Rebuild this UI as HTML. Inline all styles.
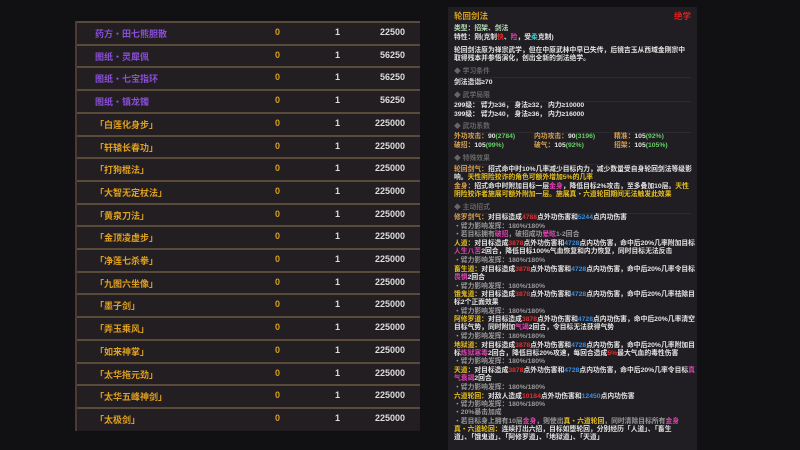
<!DOCTYPE html>
<html><head><meta charset="utf-8"><style>
body{margin:0;width:800px;height:450px;background:#111012;overflow:hidden;position:relative;font-family:"Liberation Sans","Noto Sans CJK SC",sans-serif;}
#tbl{position:absolute;left:75px;top:21px;width:343px;height:410px;background:#1f1c1f;border-left:2px solid #4a3c30;}
.row{position:absolute;left:0;width:343px;height:21px;border-top:2px solid #5a4a3a;background:#221e22;font-size:9px;font-weight:bold;}
.row span{position:absolute;top:4px;}
.n{left:18px}.a{left:198px;color:#d9a020}.b{left:258px;color:#ddd}.c{right:15px;color:#ddd}
.p{color:#8a4fd8}.o{color:#e0a020}
#pan{position:absolute;left:448px;top:7px;width:249px;height:443px;background:#201e22;}
.l{position:absolute;left:6px;font-size:6.8px;line-height:8px;color:#e4e4e4;white-space:nowrap;font-weight:bold;}
.h{color:#666;}
.g{color:#999;}
.r{color:#e03030}.bl{color:#3a8ee0}.m{color:#e040b0}.y{color:#e8c020}.or{color:#d8a050}.gr{color:#6c6}.cy{color:#3cc}
.sep{position:absolute;left:6px;width:237px;height:1px;background:#2c2a2e;}
</style></head><body>
<div id="tbl">
<div class="row" style="top:0"><span class="n p">药方・田七熊胆散</span><span class="a">0</span><span class="b">1</span><span class="c">22500</span></div>
<div class="row" style="top:22.7px"><span class="n p">图纸・灵犀佩</span><span class="a">0</span><span class="b">1</span><span class="c">56250</span></div>
<div class="row" style="top:45.4px"><span class="n p">图纸・七宝指环</span><span class="a">0</span><span class="b">1</span><span class="c">56250</span></div>
<div class="row" style="top:68.1px"><span class="n p">图纸・镇龙镯</span><span class="a">0</span><span class="b">1</span><span class="c">56250</span></div>
<div class="row" style="top:90.8px"><span class="n o">「白莲化身步」</span><span class="a">0</span><span class="b">1</span><span class="c">225000</span></div>
<div class="row" style="top:113.5px"><span class="n o">「轩辕长春功」</span><span class="a">0</span><span class="b">1</span><span class="c">225000</span></div>
<div class="row" style="top:136.2px"><span class="n o">「打狗棍法」</span><span class="a">0</span><span class="b">1</span><span class="c">225000</span></div>
<div class="row" style="top:158.9px"><span class="n o">「大智无定杖法」</span><span class="a">0</span><span class="b">1</span><span class="c">225000</span></div>
<div class="row" style="top:181.6px"><span class="n o">「黄泉刀法」</span><span class="a">0</span><span class="b">1</span><span class="c">225000</span></div>
<div class="row" style="top:204.3px"><span class="n o">「金顶凌虚步」</span><span class="a">0</span><span class="b">1</span><span class="c">225000</span></div>
<div class="row" style="top:227px"><span class="n o">「净莲七杀拳」</span><span class="a">0</span><span class="b">1</span><span class="c">225000</span></div>
<div class="row" style="top:249.7px"><span class="n o">「九图六坐像」</span><span class="a">0</span><span class="b">1</span><span class="c">225000</span></div>
<div class="row" style="top:272.4px"><span class="n o">「墨子剑」</span><span class="a">0</span><span class="b">1</span><span class="c">225000</span></div>
<div class="row" style="top:295.1px"><span class="n o">「弄玉乘风」</span><span class="a">0</span><span class="b">1</span><span class="c">225000</span></div>
<div class="row" style="top:317.8px"><span class="n o">「如来神掌」</span><span class="a">0</span><span class="b">1</span><span class="c">225000</span></div>
<div class="row" style="top:340.5px"><span class="n o">「太华拖元劲」</span><span class="a">0</span><span class="b">1</span><span class="c">225000</span></div>
<div class="row" style="top:363.2px"><span class="n o">「太华五峰神剑」</span><span class="a">0</span><span class="b">1</span><span class="c">225000</span></div>
<div class="row" style="top:385.9px"><span class="n o">「太极剑」</span><span class="a">0</span><span class="b">1</span><span class="c">225000</span></div>
</div>
<div id="pan">
<div class="l" style="top:4px;font-size:8.5px;line-height:10px;color:#d8a020">轮回剑法</div>
<div class="l" style="top:4px;left:auto;right:6px;font-size:8.5px;line-height:10px;color:#e02020">绝学</div>
<div class="l" style="top:18px"><span style="color:#bdb">类型：招架、剑法</span></div>
<div class="l" style="top:27px">特性：<span style="color:#ddd">刚(克制</span><span class="r">快</span>、<span class="m">险</span>，受<span class="cy">柔</span>克制)</div>
<div class="l" style="top:40px">轮回剑法原为禅宗武学，但在中原武林中早已失传，后镜吉玉从西域金刚宗中</div>
<div class="l" style="top:48px">取得残本并参悟演化，创出全新的剑法绝学。</div>
<div class="l h" style="top:61px">◆ 学习条件</div><div class="sep" style="top:70px"></div>
<div class="l" style="top:72px">剑法造诣≥70</div>
<div class="l h" style="top:85px">◆ 武学局限</div><div class="sep" style="top:94px"></div>
<div class="l" style="top:95px">299级： 臂力≥36， 身法≥32， 内力≥10000</div>
<div class="l" style="top:104px">399级： 臂力≥40， 身法≥36， 内力≥16000</div>
<div class="l h" style="top:116px">◆ 武功系数</div><div class="sep" style="top:125px"></div>
<div class="l" style="top:126px"><span class="or">外功攻击：</span>90<span class="gr">(2784)</span></div>
<div class="l" style="top:126px;left:86px"><span class="or">内功攻击：</span>90<span class="gr">(3196)</span></div>
<div class="l" style="top:126px;left:166px"><span class="or">精准：</span>105<span class="gr">(92%)</span></div>
<div class="l" style="top:135px"><span class="or">破招：</span>105<span class="gr">(99%)</span></div>
<div class="l" style="top:135px;left:86px"><span class="or">破气：</span>105<span class="gr">(92%)</span></div>
<div class="l" style="top:135px;left:166px"><span class="or">招架：</span>105<span class="gr">(105%)</span></div>
<div class="l h" style="top:148px">◆ 特殊效果</div><div class="sep" style="top:157px"></div>
<div class="l" style="top:159px"><span class="or">轮回剑气：</span>招式命中时10%几率减少目标内力，减少数量受自身轮回剑法等级影</div>
<div class="l" style="top:167px">响。<span class="y">天性阴险狡诈的角色可额外增加5%的几率</span></div>
<div class="l" style="top:176px"><span class="or">金身：</span>招式命中时附加目标一层<span class="m">金身</span>，降低目标2%攻击，至多叠加10层。<span class="y">天性</span></div>
<div class="l" style="top:184px"><span class="y">阴险狡诈者施展可额外附加一层。施展真・六道轮回期间无法触发此效果</span></div>
<div class="l h" style="top:197px">◆ 主动招式</div><div class="sep" style="top:206px"></div>
<div class="l" style="top:207px"><span class="or">修罗剑气：</span>对目标造成<span class="r">4788</span>点外功伤害和<span class="bl">5244</span>点内功伤害</div>
<div class="l g" style="top:216px">・臂力影响发挥：180%/180%</div>
<div class="l g" style="top:224px">・若目标拥有<span class="m">破招</span>，破招成功<span class="m">晕眩</span>1-2回合</div>
<div class="l" style="top:233px"><span class="y">人道：</span>对目标造成<span class="r">3878</span>点外功伤害和<span class="bl">4728</span>点内功伤害，命中后20%几率附加目标</div>
<div class="l" style="top:241px"><span class="m">人生八苦</span>2回合，降低目标100%气血恢复和内力恢复，同时目标无法反击</div>
<div class="l g" style="top:250px">・臂力影响发挥：180%/180%</div>
<div class="l" style="top:259px"><span class="y">畜生道：</span>对目标造成<span class="r">3878</span>点外功伤害和<span class="bl">4728</span>点内功伤害，命中后20%几率令目标</div>
<div class="l" style="top:267px"><span class="m">畏惧</span>2回合</div>
<div class="l g" style="top:276px">・臂力影响发挥：180%/180%</div>
<div class="l" style="top:284px"><span class="y">饿鬼道：</span>对目标造成<span class="r">3878</span>点外功伤害和<span class="bl">4728</span>点内功伤害，命中后20%几率祛除目</div>
<div class="l" style="top:292px">标2个正面效果</div>
<div class="l g" style="top:301px">・臂力影响发挥：180%/180%</div>
<div class="l" style="top:309px"><span class="y">阿修罗道：</span>对目标造成<span class="r">3878</span>点外功伤害和<span class="bl">4728</span>点内功伤害，命中后20%几率清空</div>
<div class="l" style="top:317px">目标气势，同时附加<span class="m">气竭</span>2回合，令目标无法获得气势</div>
<div class="l g" style="top:326px">・臂力影响发挥：180%/180%</div>
<div class="l" style="top:335px"><span class="y">地狱道：</span>对目标造成<span class="r">3878</span>点外功伤害和<span class="bl">4728</span>点内功伤害，命中后20%几率附加目</div>
<div class="l" style="top:343px">标<span class="m">炼狱寒毒</span>2回合，降低目标20%攻速，每回合造成<span class="r">5%</span>最大气血的毒性伤害</div>
<div class="l g" style="top:351px">・臂力影响发挥：180%/180%</div>
<div class="l" style="top:360px"><span class="y">天道：</span>对目标造成<span class="r">3878</span>点外功伤害和<span class="bl">4728</span>点内功伤害，命中后20%几率令目标<span class="m">真</span></div>
<div class="l" style="top:368px"><span class="m">气衰竭</span>2回合</div>
<div class="l g" style="top:377px">・臂力影响发挥：180%/180%</div>
<div class="l" style="top:386px"><span class="y">六道轮回：</span>对敌人造成<span class="r">10184</span>点外功伤害和<span class="bl">12450</span>点内功伤害</div>
<div class="l g" style="top:394px">・臂力影响发挥：180%/180%</div>
<div class="l g" style="top:402px">・20%暴击加成</div>
<div class="l g" style="top:411px">・若目标身上拥有10层<span class="m">金身</span>，则使出<span class="y">真・六道轮回</span>，同时清除目标所有<span class="m">金身</span></div>
<div class="l" style="top:419px"><span class="y">真・六道轮回：</span>连续打出六招，目标如堕轮回，分别经历「人道」、「畜生</div>
<div class="l" style="top:427px">道」、「饿鬼道」、「阿修罗道」、「地狱道」、「天道」</div>
</div>
</body></html>
